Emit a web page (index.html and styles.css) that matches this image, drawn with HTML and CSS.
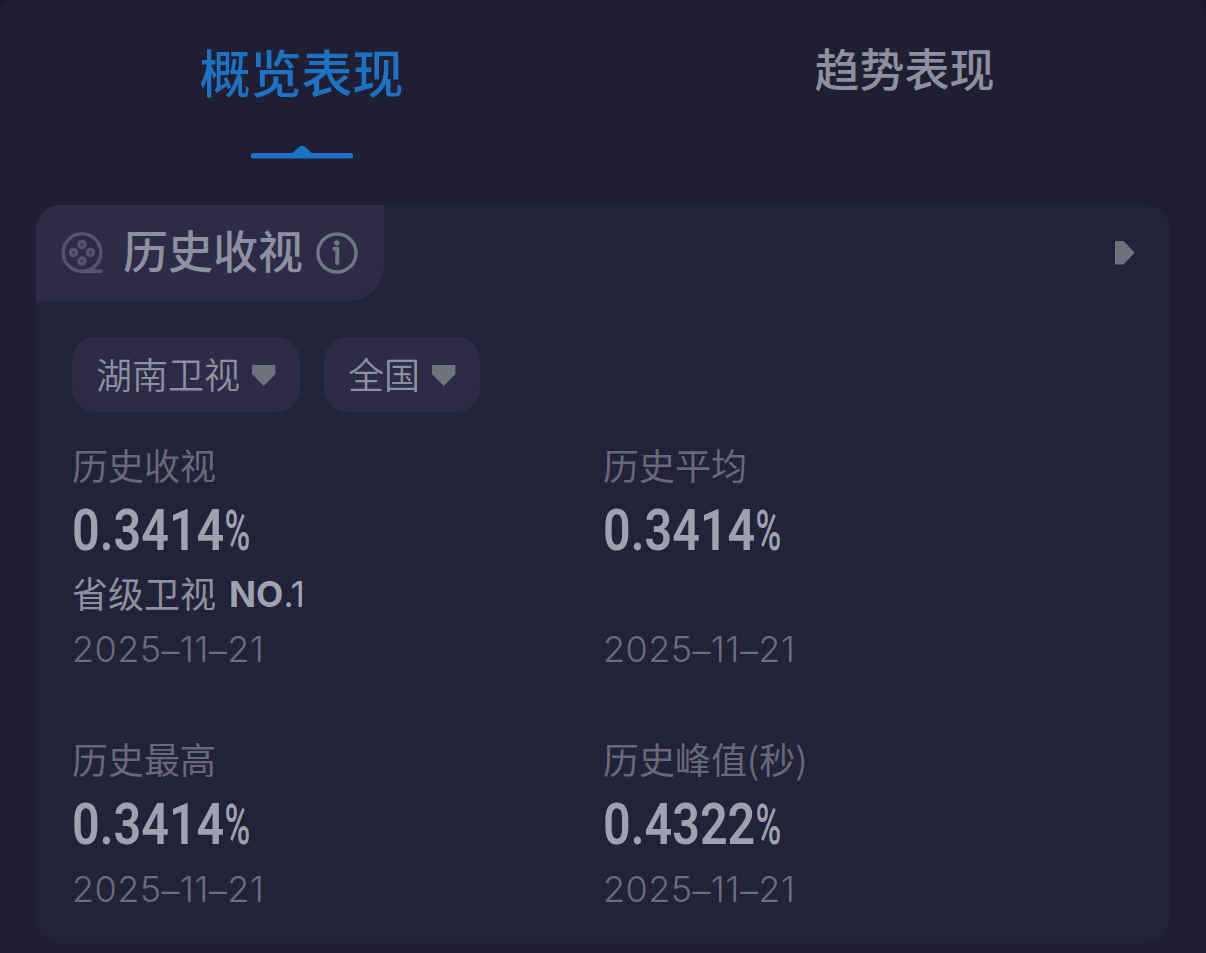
FILE: index.html
```html
<!DOCTYPE html>
<html lang="zh-CN">
<head>
    <meta charset="UTF-8">
    <meta name="viewport" content="width=device-width, initial-scale=1.0">
    <title>概览表现</title>
    <link rel="stylesheet" href="styles.css">
</head>
<body>
    <div class="panel">
        <div class="tabs">
            <div class="tab active">
                <span class="tab__text">概览表现</span>
                <svg class="tab__line" width="102" height="14" viewBox="0 0 102 14">
                    <path d="M2.500 8H41L48 2Q51 -0.500 54 2L61 8H99.500A2.750 2.750 0 0 1 99.500 13.500H2.500A2.750 2.750 0 0 1 2.500 8Z" fill="#1c73c4"/>
                </svg>
            </div>
            <div class="tab">
                <span class="tab__text">趋势表现</span>
            </div>
        </div>

        <div class="card">
            <div class="card__header">
                <div class="card__title">
                    <svg class="icon-film" width="42" height="42" viewBox="0 0 42 42" fill="none" stroke="#55546b">
                        <circle cx="21" cy="20.500" r="18.800" stroke-width="3.400"/>
                        <path d="M21 39.300H40M31 36.500L34 39" stroke-width="3.400" stroke-linecap="round"/>
                        <g stroke-width="3.600">
                            <circle cx="21" cy="12.500" r="3"/>
                            <circle cx="12.500" cy="20.500" r="3"/>
                            <circle cx="29.500" cy="20.500" r="3"/>
                            <circle cx="21" cy="29" r="3"/>
                        </g>
                    </svg>
                    <h2>历史收视</h2>
                    <svg class="icon-info" width="42" height="42" viewBox="0 0 42 42" fill="none" stroke="#73757f">
                        <circle cx="21" cy="21" r="19" stroke-width="3.400"/>
                        <path d="M18.500 16.800H21.300V31" stroke-width="4" stroke-linecap="round" stroke-linejoin="round"/>
                        <circle cx="20.800" cy="11" r="2.700" fill="#73757f" stroke="none"/>
                    </svg>
                </div>
                <svg class="icon-more" width="20" height="24" viewBox="0 0 20 24">
                    <path d="M0 0H8.500L19.800 11.700L8.500 23.500H0Z" fill="#6e727c"/>
                </svg>
            </div>

            <div class="filters">
                <div class="chip">
                    <span>湖南卫视</span>
                    <svg width="24" height="21" viewBox="0 0 24 21"><path d="M0 0H23.400V9L11.700 21L0 9Z" fill="#6e727c"/></svg>
                </div>
                <div class="chip">
                    <span>全国</span>
                    <svg width="24" height="21" viewBox="0 0 24 21"><path d="M0 0H23.400V9L11.700 21L0 9Z" fill="#6e727c"/></svg>
                </div>
            </div>

            <div class="stats">
                <div class="stat">
                    <div class="stat__label">历史收视</div>
                    <div class="stat__value"><span class="num">0.3414</span><span class="pct">%</span></div>
                    <div class="stat__rank">省级卫视<span class="rank"><b>NO</b>.1</span></div>
                    <div class="stat__date">2025<i>–</i>11<i>–</i>21</div>
                </div>
                <div class="stat">
                    <div class="stat__label">历史平均</div>
                    <div class="stat__value"><span class="num">0.3414</span><span class="pct">%</span></div>
                    <div class="stat__rank"></div>
                    <div class="stat__date">2025<i>–</i>11<i>–</i>21</div>
                </div>
                <div class="stat">
                    <div class="stat__label">历史最高</div>
                    <div class="stat__value"><span class="num">0.3414</span><span class="pct">%</span></div>
                    <div class="stat__date">2025<i>–</i>11<i>–</i>21</div>
                </div>
                <div class="stat">
                    <div class="stat__label">历史峰值(秒)</div>
                    <div class="stat__value"><span class="num">0.4322</span><span class="pct">%</span></div>
                    <div class="stat__date">2025<i>–</i>11<i>–</i>21</div>
                </div>
            </div>
        </div>
    </div>
</body>
</html>
```

FILE: styles.css
```css
* {
    box-sizing: border-box;
}

body {
    margin: 0;
    height: 953px;
    overflow: hidden;
    background-color: #1b192c;
    font-family: "Noto Sans CJK SC", sans-serif;
    color: #8e8f9f;
}

.panel {
    height: 953px;
    padding: 0 36px;
    background-color: #201e33;
    border-radius: 9px 9px 0 0 / 18px 18px 0 0;
}

.tabs {
    display: flex;
    height: 205px;
    margin: 0 -36px;
}

.tab {
    flex: 1;
    display: flex;
    flex-direction: column;
    align-items: center;
    padding-top: 38px;
    font-size: 45px;
    line-height: 60px;
    font-weight: 500;
}

.tab.active {
    font-size: 51px;
    line-height: 66px;
    color: #1c73c4;
}

.tab__line {
    margin-top: 41px;
}

/* 卡片 */
.card {
    height: 738px;
    background-color: #222239;
    border-radius: 24px;
}

.card__header {
    display: flex;
    justify-content: space-between;
    align-items: center;
    padding-right: 35px;
}

.card__title {
    display: flex;
    align-items: center;
    width: 348px;
    height: 96px;
    padding-left: 25px;
    background-color: #2d2b48;
    border-radius: 24px 0 36px 0;
}

.card__title h2 {
    margin: 0 13px 6px 20px;
    font-size: 45px;
    line-height: 60px;
    font-weight: 500;
}

.filters {
    display: flex;
    gap: 24px;
    padding: 36px 36px 0;
}

.chip {
    display: flex;
    align-items: center;
    gap: 12px;
    height: 75px;
    padding: 0 24px;
    background-color: #2d2b48;
    border-radius: 24px;
    font-size: 36px;
    font-weight: 350;
}

.chip span {
    padding-bottom: 4px;
}

.chip svg {
    margin-top: 2px;
}

/* 数据 */
.stats {
    display: grid;
    grid-template-columns: 531px 1fr;
    row-gap: 58px;
    padding: 28px 36px 0;
}

.stat__label {
    height: 48px;
    font-size: 36px;
    line-height: 48px;
    color: #686879;
}

.stat__value {
    display: flex;
    height: 80px;
    padding-top: 2px;
    font-family: Roboto, sans-serif;
    line-height: 81px;
    color: #a0a1b0;
}

/* 窄体数字 */
.num {
    width: 152.500px;
    font-size: 48.500px;
    font-weight: 600;
    transform: scaleY(1.18);
}

.pct {
    font-size: 35px;
    font-weight: 500;
    transform: scaleY(1.61);
}

.stat__rank {
    height: 54px;
    font-size: 36px;
    line-height: 49px;
}

.rank {
    margin-left: 13px;
    font-family: Inter, "Noto Sans CJK SC", sans-serif;
    font-size: 35.500px;
    color: #a0a1b0;
    vertical-align: 1px;
}

.rank b {
    font-weight: 650;
}

.stat__date {
    height: 54px;
    font-family: Inter, sans-serif;
    font-size: 36px;
    line-height: 54px;
    font-weight: 300;
    letter-spacing: 0.4px;
    color: #6b6b7c;
}

.stat__date i {
    font-style: normal;
    line-height: 0;
    vertical-align: -2px;
}
```
